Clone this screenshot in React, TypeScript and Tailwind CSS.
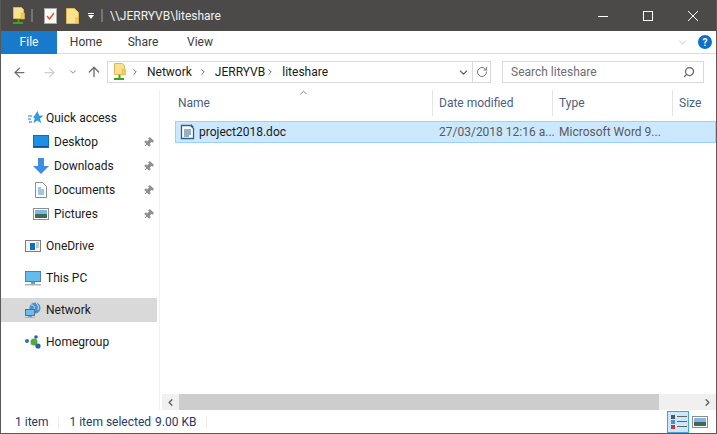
import { ChevronDown, ChevronUp, ChevronLeft, ChevronRight, ArrowLeft, ArrowRight, ArrowUp, RotateCw, Search, Pin } from "lucide-react";

const FolderNet = () => (
  <svg width="13" height="18" viewBox="0 0 13 18">
    <path d="M1.5 .5h8l2 2v9h-10z" fill="#fbe28f" stroke="#dcb75a" />
    <rect x="9" y="6" width="3.5" height="6" fill="#f4c95d" stroke="#dcb75a" strokeWidth=".6" />
    <rect x="5.5" y="12" width="2" height="3" fill="#3aa41a" />
    <rect x="1" y="15" width="10" height="2" fill="#3aa41a" />
  </svg>
);

const Star = () => (
  <svg width="16" height="16" viewBox="0 0 16 16">
    <path d="M9.5 1l1.6 4.6 4.4.2-3.6 2.8 1.3 4.6-3.8-2.7-4 2.7 1.4-4.6-1.6-1.2z" fill="#2f9be8" />
    <path d="M0 6h4M0 9h3M1 12h3" stroke="#1f6fb5" strokeWidth="1" />
  </svg>
);

const DesktopIcon = () => (
  <svg width="16" height="14" viewBox="0 0 16 14">
    <rect x=".5" y=".5" width="15" height="12" fill="#1e8fe6" stroke="#0f6cc0" />
    <rect x="1" y="11" width="14" height="1" fill="#0b4f94" />
  </svg>
);

const DownloadsIcon = () => (
  <svg width="16" height="16" viewBox="0 0 16 16">
    <path d="M5 0h6v8h5l-8 8-8-8h5z" fill="#3d8ee0" />
  </svg>
);

const DocumentsIcon = () => (
  <svg width="12" height="16" viewBox="0 0 12 16">
    <path d="M.5.5h7l4 4v11h-11z" fill="#fff" stroke="#8d8d8d" />
    <path d="M3 6h3M3 8h6M3 10h6M3 12h6" stroke="#3c8fd6" />
  </svg>
);

const PicturesIcon = () => (
  <svg width="16" height="12" viewBox="0 0 16 12">
    <rect x=".5" y=".5" width="15" height="11" fill="#fff" stroke="#8d8d8d" />
    <rect x="2" y="2" width="12" height="4" fill="#7fb6e6" />
    <rect x="2" y="6" width="12" height="4" fill="#3f6a55" />
  </svg>
);

const OneDriveIcon = () => (
  <svg width="16" height="12" viewBox="0 0 16 12">
    <rect x=".5" y=".5" width="15" height="11" fill="#f4f4f4" stroke="#7d7d7d" />
    <rect x="5" y="3" width="5" height="7" fill="#0f6cc8" />
    <path d="M11 3h3M11 5h3M11 7h3" stroke="#999" />
  </svg>
);

const ThisPcIcon = () => (
  <svg width="16" height="15" viewBox="0 0 16 15">
    <rect x=".5" y=".5" width="15" height="10" fill="#63bcee" stroke="#5a7f9b" />
    <rect x="6" y="11" width="4" height="2" fill="#7f98aa" />
    <rect y="13" width="16" height="1.5" fill="#a9b4bc" />
  </svg>
);

const NetworkIcon = () => (
  <svg width="16" height="16" viewBox="0 0 16 16">
    <circle cx="10" cy="6" r="5.5" fill="#4a8fc9" />
    <path d="M6 3c3 0 4 2 3 4M11 1c2 2 3 4 2 7" stroke="#cfe4f4" fill="none" />
    <rect x=".5" y="7.5" width="9" height="6" fill="#6dbdec" stroke="#50718c" />
    <rect x="3" y="14" width="4" height="1" fill="#7f98aa" />
    <rect y="15" width="10" height="1" fill="#a9b4bc" />
  </svg>
);

const HomegroupIcon = () => (
  <svg width="16" height="14" viewBox="0 0 16 14">
    <circle cx="2" cy="6" r="2" fill="#2b70b8" />
    <circle cx="9" cy="7" r="3.5" fill="#58a83a" />
    <circle cx="11" cy="2" r="1.8" fill="#1f63ad" />
    <circle cx="13" cy="11" r="2.6" fill="#1f63ad" />
  </svg>
);

const DocFile = () => (
  <svg width="16" height="16" viewBox="0 0 16 16">
    <path d="M1.5 1.5h9l3 3v10h-12z" fill="#fff" stroke="#2f5f8a" strokeWidth="1.3" />
    <path d="M4 6h7M4 8h7M4 10h7M4 12h5" stroke="#2f5f8a" />
    <path d="M11 0l3 3h-3z" fill="#2f5f8a" />
  </svg>
);

const Clipboard = () => (
  <svg width="13" height="16" viewBox="0 0 13 16">
    <rect x=".5" y=".5" width="12" height="15" fill="#fbfbfb" stroke="#a9a9a9" />
    <path d="M3 8l2.5 3L10 5" stroke="#e2582b" strokeWidth="1.5" fill="none" />
  </svg>
);

const FolderPlain = () => (
  <svg width="13" height="16" viewBox="0 0 13 16">
    <path d="M.5.5h8l4 4v11h-12z" fill="#fbe28f" stroke="#dcb75a" />
    <rect x="9" y="9" width="3" height="6" fill="#f4c95d" />
  </svg>
);

const nav = [
  { label: "Desktop", icon: <DesktopIcon /> },
  { label: "Downloads", icon: <DownloadsIcon /> },
  { label: "Documents", icon: <DocumentsIcon /> },
  { label: "Pictures", icon: <PicturesIcon /> },
];

const NavRow = ({ icon, label, active }: { icon: React.ReactNode; label: string; active?: boolean }) => (
  <div className={`h-6 w-[156px] flex items-center pl-[24px] ${active ? "bg-[#d9d9d9]" : ""}`}>
    <div className="w-4 flex justify-center mr-[5px]">{icon}</div>
    <span>{label}</span>
  </div>
);

const App = () => {
  return (
    <div
      className="w-[717px] h-[434px] flex flex-col bg-white border-x border-b border-[#5b5956] text-[12px] text-[#1a1a1a] overflow-hidden"
      style={{ fontFamily: 'Roboto, "Open Sans", sans-serif' }}
    >
      {/* Title bar */}
      <div className="h-[31px] shrink-0 -mx-px bg-[#4c4a48] flex items-center text-white">
        <div className="ml-3 flex items-center"><FolderNet /></div>
        <div className="ml-[6px] w-[2px] h-[13px] bg-[#77756f]" />
        <div className="ml-[11px] flex items-center"><Clipboard /></div>
        <div className="ml-[9px] flex items-center"><FolderPlain /></div>
        <div className="ml-2 w-[7px] flex flex-col items-center gap-[1px]">
          <div className="w-[6px] h-px bg-white" />
          <div className="w-0 h-0 border-x-[3.5px] border-x-transparent border-t-[4px] border-t-white" />
        </div>
        <div className="ml-[7px] w-[2px] h-[13px] bg-[#77756f]" />
        <span className="ml-[7px] text-[#f2f2f2]">\\JERRYVB\liteshare</span>
        <div className="ml-auto mr-[19px] flex items-center gap-[35px]">
          <svg width="10" height="10" viewBox="0 0 10 10" shapeRendering="crispEdges"><path d="M0 5.5h10" stroke="#fff" /></svg>
          <svg width="10" height="10" viewBox="0 0 10 10" shapeRendering="crispEdges"><rect x=".5" y=".5" width="9" height="9" fill="none" stroke="#fff" /></svg>
          <svg width="10" height="10" viewBox="0 0 10 10"><path d="M0 0l10 10M10 0L0 10" stroke="#fff" /></svg>
        </div>
      </div>

      {/* Ribbon tabs */}
      <div className="h-[23px] shrink-0 flex items-center border-b border-[#dcdcdc] text-[#3b3b3b]">
        <div className="h-[23px] w-[56px] bg-[#1979ca] text-white flex items-center justify-center">File</div>
        <div className="w-[58px] text-center">Home</div>
        <div className="w-[58px] -ml-[1px] text-center">Share</div>
        <div className="w-[58px] -ml-[1px] text-center">View</div>
        <ChevronDown size={13} className="ml-auto mr-[9px] text-[#9a9a9a]" strokeWidth={1} />
        <div className="w-[14px] h-[14px] mr-[4px] rounded-full bg-[#0e6fc9] text-white text-[10px] font-bold flex items-center justify-center">?</div>
      </div>

      {/* Address row */}
      <div className="h-[36px] shrink-0 flex items-center">
        <ArrowLeft size={15} className="ml-[11px] text-[#6d6d6d]" />
        <ArrowRight size={15} className="ml-[15px] text-[#cfcfcf]" />
        <ChevronDown size={10} className="ml-[11px] text-[#7a7a7a]" />
        <ArrowUp size={16} className="ml-[8px] text-[#6d6d6d]" />
        <div className="ml-[5px] h-[22px] w-[384px] border border-[#d9d9d9] flex items-center">
          <div className="ml-[5px] flex items-center"><FolderNet /></div>
          <ChevronRight size={10} className="ml-[4px] text-[#555]" />
          <span className="ml-[7px]">Network</span>
          <ChevronRight size={10} className="ml-[6px] text-[#555]" />
          <span className="ml-[7px]">JERRYVB</span>
          <ChevronRight size={10} className="text-[#555]" />
          <span className="ml-[7px]">liteshare</span>
          <ChevronDown size={13} className="ml-auto mr-[2px] text-[#555]" />
          <div className="w-px h-[20px] bg-[#d9d9d9]" />
          <RotateCw size={12} className="ml-[3px] mr-[2px] text-[#777]" />
        </div>
        <div className="ml-[11px] h-[22px] w-[202px] border border-[#d9d9d9] flex items-center pl-[8px] text-[#6d6d6d]">
          <span>Search liteshare</span>
          <Search size={12} className="ml-auto mr-[8px] -scale-x-100 text-[#666]" strokeWidth={2.5} />
        </div>
      </div>

      {/* Body */}
      <div className="flex-1 min-h-0 flex">
        <div className="w-[159px] shrink-0 border-r border-[#f0f0f0] flex flex-col pt-[16px]">
          <div className="h-6 flex items-center pl-[27px]">
            <div className="mr-[2px]"><Star /></div>
            <span>Quick access</span>
          </div>
          {nav.map((item) => (
            <div key={item.label} className="h-6 flex items-center pl-[32px] pr-[3px]">
              <div className="w-4 flex justify-center mr-[5px]">{item.icon}</div>
              <span>{item.label}</span>
              <Pin size={11} className="ml-auto mr-[2px] rotate-45 text-[#8f8f8f]" fill="#8f8f8f" />
            </div>
          ))}
          <div className="mt-[8px] flex flex-col gap-[8px]">
            <NavRow icon={<OneDriveIcon />} label="OneDrive" />
            <NavRow icon={<ThisPcIcon />} label="This PC" />
            <NavRow icon={<NetworkIcon />} label="Network" active />
            <NavRow icon={<HomegroupIcon />} label="Homegroup" />
          </div>
        </div>

        <div className="flex-1 min-w-0 flex flex-col">
          {/* Column headers */}
          <div className="relative h-[31px] shrink-0 flex text-[#4c607a]">
            <ChevronUp size={11} className="absolute left-[138px] -top-[3px] text-[#777]" />
            <div className="w-[273px] h-[26px] border-r border-[#e5e5e5] pl-[18px] flex items-center">Name</div>
            <div className="w-[120px] h-[26px] border-r border-[#e5e5e5] pl-[6px] flex items-center">Date modified</div>
            <div className="w-[120px] h-[26px] border-r border-[#e5e5e5] pl-[6px] flex items-center">Type</div>
            <div className="pl-[6px] h-[26px] flex items-center">Size</div>
          </div>
          {/* Selected row */}
          <div className="h-[22px] shrink-0 ml-[15px] flex items-center bg-[#cce8ff] border border-[#99d1ff] text-[#5a5a5a]">
            <div className="w-[257px] flex items-center pl-[4px] text-[#1a1a1a]">
              <DocFile />
              <span className="ml-[3px]">project2018.doc</span>
            </div>
            <div className="w-[120px] pl-[6px] whitespace-nowrap">27/03/2018 12:16 a...</div>
            <div className="pl-[6px] whitespace-nowrap">Microsoft Word 9...</div>
          </div>
          <div className="flex-1" />
          {/* Horizontal scrollbar */}
          <div className="h-[16px] shrink-0 flex bg-[#f0f0f0] ml-[2px]">
            <div className="w-[17px] flex items-center justify-center">
              <ChevronLeft size={11} strokeWidth={3} className="text-[#606060]" />
            </div>
            <div className="w-[480px] bg-[#cdcdcd]" />
            <div className="ml-auto w-[17px] flex items-center justify-center">
              <ChevronRight size={11} strokeWidth={3} className="text-[#606060]" />
            </div>
          </div>
        </div>
      </div>

      {/* Status bar */}
      <div className="h-[23px] shrink-0 flex items-center text-[#1f3a68]">
        <span className="ml-[14px]">1 item</span>
        <div className="ml-[10px] w-px h-[12px] bg-[#eeeeee]" />
        <span className="ml-[10px]">1 item selected</span>
        <span className="ml-[4px]">9.00 KB</span>
        <div className="ml-[10px] w-px h-[12px] bg-[#eeeeee]" />
        <div className="ml-auto flex items-center mr-[5px]">
          <div className="w-[22px] h-[22px] bg-[#cce8ff] border border-[#3ea6dc] flex flex-col justify-center gap-[1px] pl-[3px]">
            {["bg-[#555]", "bg-[#4a90c8]", "bg-[#c33]"].map((c) => (
              <div key={c} className="flex items-center gap-[2px]">
                <div className={`w-[4px] h-[4px] ${c}`} />
                <div className="w-[10px] h-px bg-[#666]" />
              </div>
            ))}
          </div>
          <div className="w-[22px] h-[22px] flex items-center justify-center"><PicturesIcon /></div>
        </div>
      </div>
    </div>
  );
};

export default App;
